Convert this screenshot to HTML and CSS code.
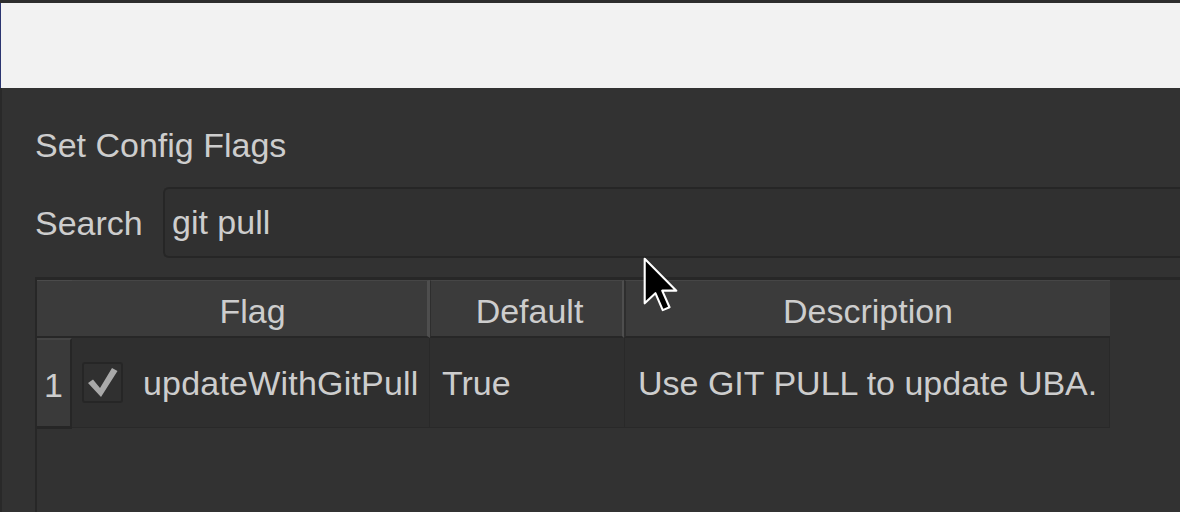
FILE: index.html
```html
<!DOCTYPE html>
<html>
<head>
<meta charset="utf-8">
<link rel="stylesheet" href="styles.css">
</head>
<body>
<div class="topstrip"></div>
<div class="band"></div>
<main class="dialog">
  <h1 class="title">Set Config Flags</h1>
  <div class="search">
    <span class="search-label">Search</span>
    <div class="search-input">git pull</div>
  </div>
  <div class="table">
    <div class="thead">
      <div class="corner"></div>
      <div class="th th-flag">Flag</div>
      <div class="th th-default">Default</div>
      <div class="th th-desc">Description</div>
    </div>
    <div class="trow">
      <div class="rowhead">1</div>
      <div class="td td-flag">
        <span class="checkbox">
          <svg viewBox="0 0 37 37" width="37" height="37"><path d="M4 19 L9 15.5 L16 24 L28 4 L33.5 7 L17 33 Z" fill="#a9a9a9"/></svg>
        </span>
        <span class="flag-name">updateWithGitPull</span>
      </div>
      <div class="td td-default">True</div>
      <div class="td td-desc">Use GIT PULL to update UBA.</div>
    </div>
  </div>
  <svg class="cursor" viewBox="0 0 12.4 19.8" width="35" height="56">
    <path d="M0.6 0.6 L0.6 16.4 L4.4 12.8 L7 18.8 L9.4 17.8 L6.8 11.9 L11.8 11.9 Z" fill="#000" stroke="#fff" stroke-width="0.75" stroke-linejoin="round"/>
  </svg>
</main>
</body>
</html>
```
FILE: styles.css
```css
html, body {
  margin: 0;
  padding: 0;
}
body {
  width: 1180px;
  height: 512px;
  overflow: hidden;
  background: #323232;
  font-family: "Liberation Sans", Arial, sans-serif;
  display: flex;
  flex-direction: column;
}
.topstrip {
  height: 3px;
  background: #2d2d2d;
  flex: none;
}
.band {
  height: 85px;
  flex: none;
  background: #f2f2f2;
  border-left: 1px solid #2b3570;
  box-sizing: border-box;
}
.dialog {
  flex: 1;
  min-height: 0;
  position: relative;
  background: #323232;
  border-left: 2px solid #292929;
  padding: 37px 0 0 33px;
  display: flex;
  flex-direction: column;
  color: #cdcdcd;
  font-size: 34px;
  overflow: hidden;
}
.title {
  margin: 0;
  font-weight: normal;
  font-size: 34px;
  line-height: 40px;
}
.search {
  display: flex;
  align-items: center;
  margin-top: 22px;
  height: 71px;
  flex: none;
}
.search-label {
  width: 128px;
  flex: none;
  line-height: 40px;
}
.search-input {
  flex: 1;
  height: 71px;
  box-sizing: border-box;
  border: 2px solid #262626;
  border-right: none;
  border-radius: 6px 0 0 6px;
  background: #303030;
  padding-left: 7px;
  display: flex;
  align-items: center;
  margin-right: -4px;
}
.table {
  margin-top: 19px;
  flex: 1;
  border-top: 3px solid #272727;
  border-left: 2px solid #272727;
  background: #323232;
}
.thead {
  display: flex;
  height: 58px;
}
.corner {
  width: 35px;
  box-sizing: border-box;
  background: #3b3b3b;
  border-top: 1px solid #4b4b4b;
  border-bottom: 2px solid #272727;
}
.th {
  display: flex;
  justify-content: center;
  align-items: center;
  box-sizing: border-box;
  background: #3b3b3b;
  border-top: 1px solid #464646;
  border-bottom: 2px solid #272727;
  padding-top: 5px;
}
.th-flag {
  width: 358px;
  border-right: 3px solid #4e4e4e;
  padding-left: 6px;
}
.th-default {
  width: 194px;
  border-left: 1px solid #2e2e2e;
  border-right: 2px solid #4e4e4e;
  padding-left: 6px;
}
.th-desc {
  width: 486px;
  border-left: 2px solid #2e2e2e;
}
.trow {
  display: flex;
  height: 90px;
}
.rowhead {
  width: 35px;
  height: 91px;
  box-sizing: border-box;
  background: #3a3a3a;
  border-top: 2px solid #444444;
  border-right: 2px solid #262626;
  border-bottom: 3px solid #262626;
  display: flex;
  align-items: center;
  justify-content: center;
  padding-top: 4px;
}
.td {
  box-sizing: border-box;
  background: #2f2f2f;
  border-right: 1px solid #292929;
  border-bottom: 1px solid #292929;
  display: flex;
  align-items: center;
  white-space: nowrap;
  padding-top: 2px;
}
.td-flag {
  width: 358px;
  padding-left: 10px;
}
.td-default {
  width: 195px;
  padding-left: 12px;
}
.td-desc {
  width: 485px;
  padding-left: 13px;
}
.checkbox {
  width: 41px;
  height: 41px;
  box-sizing: border-box;
  border: 2px solid #262626;
  border-radius: 3px;
  background: #303030;
  display: flex;
  align-items: center;
  justify-content: center;
  flex: none;
  margin-top: -2px;
}
.flag-name {
  margin-left: 20px;
  letter-spacing: 0.2px;
}
.cursor {
  position: absolute;
  left: 641px;
  top: 169px;
}
```
